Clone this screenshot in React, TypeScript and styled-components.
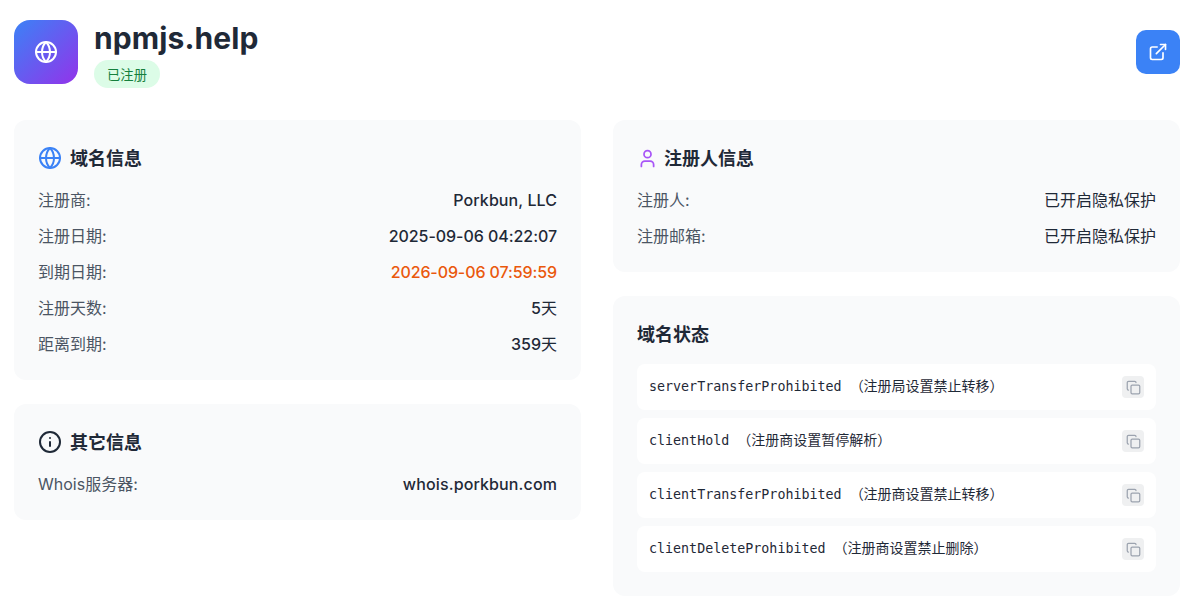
import React from "react";
import styled, { createGlobalStyle } from "styled-components";
import { Globe, ExternalLink, User, Info, Copy } from "lucide-react";

const Global = createGlobalStyle`
  html, body { margin: 0; padding: 0; background: #fff; }
  body { font-family: Inter, "Noto Sans CJK SC", sans-serif; color: #1f2937; }
`;

const Page = styled.div`
  width: 1190px;
  height: 610px;
  box-sizing: border-box;
  padding: 20px 10px 0 14px;
  overflow: hidden;
`;
const Header = styled.header`
  display: flex;
  justify-content: space-between;
  align-items: flex-start;
  height: 100px;
`;
const Brand = styled.div`
  display: flex;
  gap: 16px;
`;
const LogoTile = styled.div`
  width: 64px;
  height: 64px;
  border-radius: 16px;
  background: linear-gradient(135deg, #3b82f6, #9333ea);
  display: flex;
  align-items: center;
  justify-content: center;
  color: #fff;
`;
const BrandText = styled.div`
  display: flex;
  flex-direction: column;
  align-items: flex-start;
  gap: 4px;
`;
const DomainName = styled.h1`
  margin: 0;
  font-size: 30px;
  line-height: 36px;
  font-weight: 700;
  letter-spacing: 0.1px;
  color: #1f2937;
`;
const Badge = styled.span`
  padding: 0 13px;
  height: 28px;
  display: inline-flex;
  align-items: center;
  border-radius: 14px;
  background: #dcfce7;
  color: #15803d;
  font-size: 13.33px;
`;
const OpenButton = styled.a`
  width: 44px;
  height: 44px;
  margin-top: 10px;
  border-radius: 10px;
  background: #3b82f6;
  color: #fff;
  display: flex;
  align-items: center;
  justify-content: center;
`;
const Columns = styled.main`
  display: grid;
  grid-template-columns: 567px 567px;
  gap: 32px;
`;
const Column = styled.div`
  display: flex;
  flex-direction: column;
  gap: 24px;
`;
const Card = styled.section`
  background: #f9fafb;
  border-radius: 12px;
  padding: 24px;
`;
const CardTitle = styled.h2<{ $gap?: number }>`
  margin: 0 0 16px;
  height: 28px;
  display: flex;
  align-items: center;
  gap: ${(p) => p.$gap ?? 8}px;
  font-size: 18px;
  font-weight: 600;
  color: #1f2937;
`;
const TitleText = styled.span`
  padding-top: 2px;
  line-height: 24px;
`;
const IconSlot = styled.span<{ $color: string }>`
  display: flex;
  color: ${(p) => p.$color};
`;
const Rows = styled.div`
  display: flex;
  flex-direction: column;
  gap: 12px;
`;
const Row = styled.div`
  display: flex;
  justify-content: space-between;
  font-size: 16px;
  line-height: 24px;
`;
const Label = styled.span`
  color: #4b5563;
`;
const Value = styled.span<{ $warn?: boolean; $track?: number }>`
  color: ${(p) => (p.$warn ? "#ea580c" : "#1f2937")};
  font-weight: 500;
  letter-spacing: ${(p) => p.$track ?? 0}px;
`;
const PlainValue = styled.span`
  color: #1f2937;
  font-weight: 400;
`;
const StatusList = styled.div`
  display: flex;
  flex-direction: column;
  gap: 8px;
`;
const StatusRow = styled.div`
  display: flex;
  align-items: center;
  justify-content: space-between;
  height: 46px;
  box-sizing: border-box;
  padding: 0 12px;
  background: #fff;
  border-radius: 8px;
`;
const StatusText = styled.span`
  display: flex;
  align-items: baseline;
  padding-bottom: 5px;
  color: #1f2937;
`;
const StatusCode = styled.code`
  font-family: "DejaVu Sans Mono", monospace;
  font-size: 13.33px;
  white-space: pre;
`;
const StatusNote = styled.span`
  font-family: "Noto Sans CJK SC", sans-serif;
  font-size: 14px;
  line-height: 20px;
`;
const CopyButton = styled.button`
  width: 22px;
  height: 22px;
  padding: 0;
  border: 0;
  border-radius: 4px;
  background: #eff0f1;
  color: #9ca3af;
  display: flex;
  align-items: center;
  justify-content: center;
`;

const statuses = [
  ["serverTransferProhibited", "（注册局设置禁止转移）"],
  ["clientHold", "（注册商设置暂停解析）"],
  ["clientTransferProhibited", "（注册商设置禁止转移）"],
  ["clientDeleteProhibited", "（注册商设置禁止删除）"],
];

export default function App() {
  return (
    <Page>
      <Global />
      <Header>
        <Brand>
          <LogoTile>
            <Globe size={24} strokeWidth={2} />
          </LogoTile>
          <BrandText>
            <DomainName>npmjs.help</DomainName>
            <Badge>已注册</Badge>
          </BrandText>
        </Brand>
        <OpenButton>
          <ExternalLink size={20} strokeWidth={2} />
        </OpenButton>
      </Header>
      <Columns>
        <Column>
          <Card>
            <CardTitle>
              <IconSlot $color="#3b82f6"><Globe size={24} /></IconSlot>
              <TitleText>域名信息</TitleText>
            </CardTitle>
            <Rows>
              <Row><Label>注册商:</Label><Value $track={0.08}>Porkbun, LLC</Value></Row>
              <Row><Label>注册日期:</Label><Value $track={-0.05}>2025-09-06 04:22:07</Value></Row>
              <Row><Label>到期日期:</Label><Value $warn $track={-0.1}>2026-09-06 07:59:59</Value></Row>
              <Row><Label>注册天数:</Label><span><Value>5</Value><PlainValue>天</PlainValue></span></Row>
              <Row><Label>距离到期:</Label><span><Value>359</Value><PlainValue>天</PlainValue></span></Row>
            </Rows>
          </Card>
          <Card>
            <CardTitle>
              <IconSlot $color="#1f2937"><Info size={24} /></IconSlot>
              <TitleText>其它信息</TitleText>
            </CardTitle>
            <Rows>
              <Row><Label>Whois服务器:</Label><Value $track={0.12}>whois.porkbun.com</Value></Row>
            </Rows>
          </Card>
        </Column>
        <Column>
          <Card>
            <CardTitle $gap={6}>
              <IconSlot $color="#a855f7"><User size={21} /></IconSlot>
              <TitleText>注册人信息</TitleText>
            </CardTitle>
            <Rows>
              <Row><Label>注册人:</Label><PlainValue>已开启隐私保护</PlainValue></Row>
              <Row><Label>注册邮箱:</Label><PlainValue>已开启隐私保护</PlainValue></Row>
            </Rows>
          </Card>
          <Card>
            <CardTitle><TitleText>域名状态</TitleText></CardTitle>
            <StatusList>
              {statuses.map(([code, note]) => (
                <StatusRow key={code}>
                  <StatusText>
                    <StatusCode>{code} </StatusCode>
                    <StatusNote>{note}</StatusNote>
                  </StatusText>
                  <CopyButton><Copy size={15} /></CopyButton>
                </StatusRow>
              ))}
            </StatusList>
          </Card>
        </Column>
      </Columns>
    </Page>
  );
}
